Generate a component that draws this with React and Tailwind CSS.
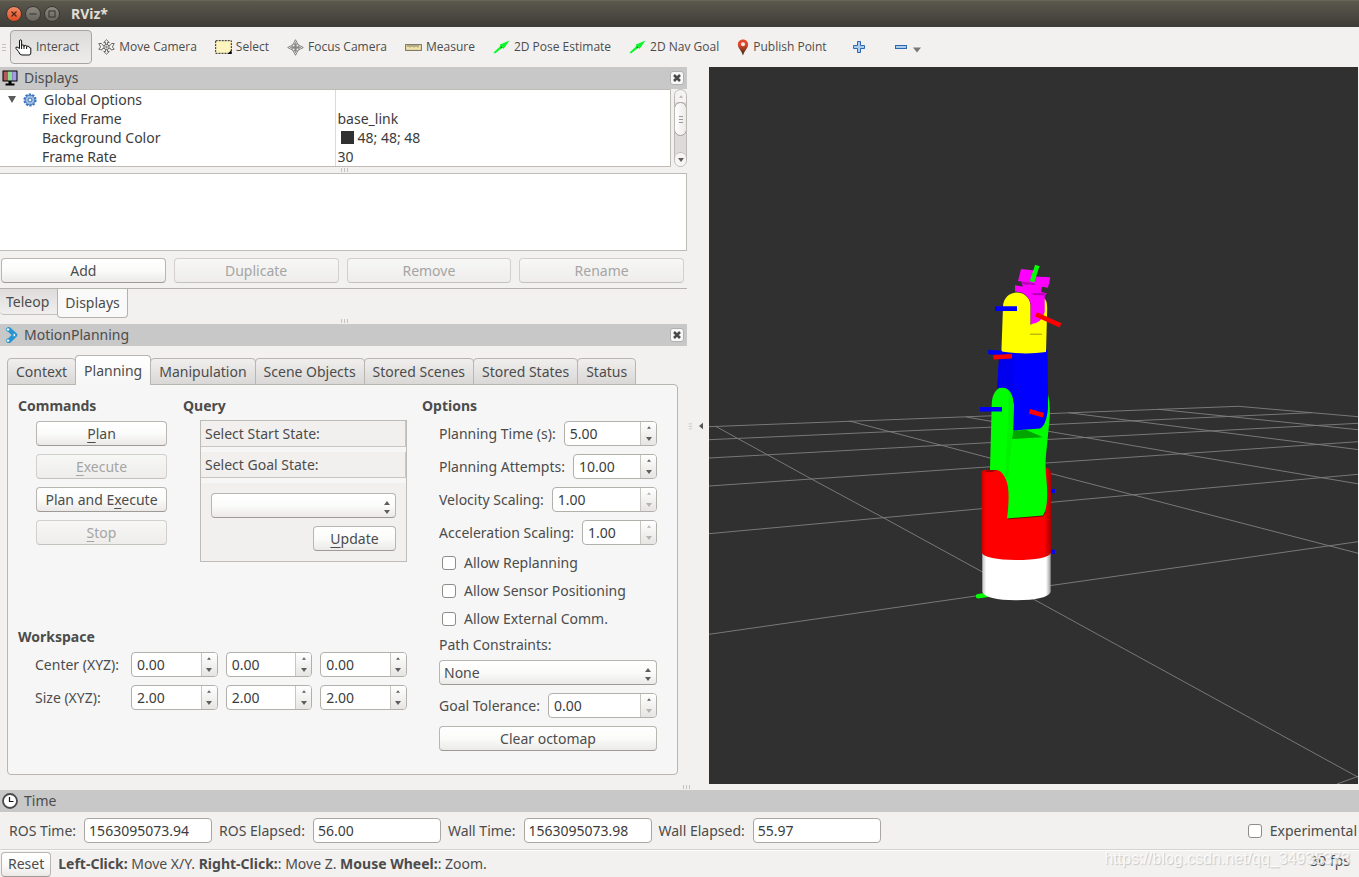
import React, { useState } from "react";

const raised = "border border-[#b9b5b0] border-b-[#9e9a95] rounded-[4px] bg-gradient-to-b from-white via-[#fbfbfa] to-[#ebeae8] text-[#4c4c4c]";
const faded = "border border-[#d2cfcc] border-b-[#c4c1bd] rounded-[4px] bg-gradient-to-b from-[#f7f7f6] to-[#eeedeb] text-[#a5a5a5]";

const Button = ({ children, disabled, className = "" }) => (
   <button type="button" disabled={disabled} className={`h-[25px] px-1 text-center leading-none whitespace-nowrap ${disabled ? faded : raised} ${className}`}>
      {children}
   </button>
);

// underlined mnemonic letter
const Key = ({ children }) => <span className="underline underline-offset-3">{children}</span>;

const Triangle = ({ dir, dim, small }) => (
   <svg viewBox="0 0 6 4" className={small ? "w-1 h-[3px]" : "w-[6px] h-1"} fill={dim ? "#b4b4b4" : "#5e5e5e"}>
      <path d={dir === "up" ? "M0 4 L3 0 L6 4Z" : "M0 0 L3 4 L6 0Z"} />
   </svg>
);

const SpinBox = ({ id, label, value, upDim, downDim, className = "" }) => {
   const [val, setVal] = useState(value);
   const step = (n) => setVal((parseFloat(val) + n).toFixed(2));
   return (
      <div className={`flex h-[25px] min-w-0 border border-[#b3afaa] rounded-[4px] bg-white overflow-hidden ${className}`}>
         <input
            id={id}
            aria-label={label}
            value={val}
            onChange={(e) => setVal(e.target.value)}
            className="flex-1 min-w-0 px-[5px] text-[#3c3c3c] outline-none"
         />
         <div className="flex flex-col w-4 shrink-0 border-l border-[#c9c6c2] bg-gradient-to-b from-white to-[#e6e5e3]">
            <button type="button" aria-label="Increase" onClick={() => step(1)} className="flex-1 flex items-center justify-center">
               <Triangle dir="up" dim={upDim} small />
            </button>
            <button type="button" aria-label="Decrease" onClick={() => step(-1)} className="flex-1 flex items-center justify-center">
               <Triangle dir="down" dim={downDim} />
            </button>
         </div>
      </div>
   );
};

const OptionRow = ({ id, label, ...rest }) => (
   <div className="flex items-center gap-2">
      <label htmlFor={id} className="whitespace-nowrap">{label}</label>
      <SpinBox id={id} className="flex-1" {...rest} />
   </div>
);

const Combo = ({ id, label, options }) => (
   <div className="relative">
      <select id={id} aria-label={label} className={`appearance-none w-full h-[25px] px-1 ${raised}`}>
         {options.map((o) => <option key={o}>{o}</option>)}
      </select>
      <span className="absolute right-[6px] top-2 flex flex-col gap-[5px] pointer-events-none">
         <Triangle dir="up" />
         <Triangle dir="down" />
      </span>
   </div>
);

const Check = ({ id, label }) => (
   <div className="flex items-center gap-2">
      <input id={id} type="checkbox" className="appearance-none size-[14px] border border-[#8f8b86] rounded-[3px] bg-white checked:bg-[#f07746]" />
      <label htmlFor={id} className="whitespace-nowrap">{label}</label>
   </div>
);

const Grip = ({ vertical }) => (
   <svg viewBox="0 0 8 8" className={`size-2 ${vertical ? "rotate-90" : ""}`} stroke="#c4c2bf">
      <path d="M1.5 2V6M4.5 2V6M7.5 2V6" />
   </svg>
);

const DockTitle = ({ icon, children }) => (
   <div className="flex items-center h-[22px] bg-[#c8c8c8] pl-[2px] pr-[3px]">
      <span className="w-[22px]">{icon}</span>
      <h2 className="flex-1">{children}</h2>
      <button type="button" aria-label={`Close ${children}`} className="size-[14px] flex items-center justify-center rounded-[3px] bg-[#f8f8f8] border border-[#b0b0b0]">
         <svg viewBox="0 0 8 8" className="size-2" stroke="#4a4a4a" strokeWidth="2.6"><path d="M1 1L7 7M7 1L1 7" /></svg>
      </button>
   </div>
);

const HandIcon = () => (
   <svg viewBox="0 0 17 17" className="size-[17px]" fill="#fff" stroke="#111" strokeLinejoin="round">
      <path d="M3.5 12.5 L1 9.5 Q0.3 8 2 8 L4.5 9.5 V2 Q4.5 0.8 5.5 0.8 Q6.6 0.8 6.6 2 V7 Q6.6 5.8 7.6 5.8 Q9 5.8 9 7 V7.5 Q9 6.3 10.2 6.3 Q11.6 6.3 11.6 7.5 V8 Q11.8 7 13 7 Q14.3 7.2 14.3 8.6 L15.8 9 V14 Q15.8 16 14 16 H7 Q4.5 16 3.5 12.5Z" />
      <path d="M6.6 7V10M9 7V10M11.6 8V10" fill="none" />
   </svg>
);

const MoveIcon = () => (
   <svg viewBox="0 0 17 16" className="w-[17px] h-4" fill="#f4f4f4" stroke="#5a5a5a" strokeWidth="0.9">
      <path d="M8.5 0.8 L11.3 3.5 H9.5 V5.4 H7.5 V3.5 H5.7Z M8.5 15.2 L5.7 12.5 H7.5 V10.6 H9.5 V12.5 H11.3Z" />
      <path d="M0.8 4.5 H3.5 L5 6.5 L7 7 V9 L4.5 9.5 L3.8 11 L0.8 10.2 L2.6 8Z M16.2 4.5 H13.5 L12 6.5 L10 7 V9 L12.5 9.5 L13.2 11 L16.2 10.2 L14.4 8Z" />
      <circle cx="8.5" cy="8" r="2.6" />
      <circle cx="8.5" cy="8" r="0.8" />
   </svg>
);

const SelectIcon = () => (
   <svg viewBox="0 0 17 14" className="w-[17px] h-[14px]">
      <rect x="0.7" y="0.7" width="15.6" height="12.6" fill="#fff6bf" stroke="#222" strokeDasharray="2 1" />
      <path d="M16.5 10 L12.5 14 H16.5Z" fill="#000" />
   </svg>
);

const FocusIcon = () => (
   <svg viewBox="0 0 17 17" className="size-[17px]" fill="none" stroke="#777">
      <circle cx="8.5" cy="8.5" r="4.3" />
      <circle cx="8.5" cy="8.5" r="1.5" />
      <path d="M8.5 0.7 L10 3.5 V6 H7 V3.5Z M8.5 16.3 L7 13.5 V11 H10 V13.5Z M0.7 8.5 L3.5 7 H6 V10 H3.5Z M16.3 8.5 L13.5 10 H11 V7 H13.5Z" fill="#e8e8e8" strokeWidth="0.9" />
      <path d="M8.5 3V14M3 8.5H14" strokeWidth="0.7" />
   </svg>
);

const RulerIcon = () => (
   <svg viewBox="0 0 17 7" className="w-[17px] h-[7px]">
      <rect x="0.6" y="0.6" width="15.8" height="5.8" fill="#efe3ab" stroke="#75715c" />
      <path d="M3 1V3M5 1V3.5M7 1V3M9 1V3.5M11 1V3M13 1V3.5" stroke="#6b6752" strokeWidth="0.8" />
   </svg>
);

const ArrowIcon = () => (
   <svg viewBox="0 0 17 14" className="w-[17px] h-[14px]">
      <path d="M0.5 12.5 L7.5 6 L6.5 4.8 L16.5 0.5 L10.5 9 L9.5 7.8 L2 13.6Z" fill="#0ef52a" />
      <path d="M7.5 6 L9.5 7.8 L8 8.2Z" fill="#0a6a18" />
   </svg>
);

const PinIcon = () => (
   <svg viewBox="0 0 12 17" className="w-3 h-[17px]">
      <defs>
         <linearGradient id="pin" x1="0" y1="0" x2="0" y2="1">
            <stop offset="0.3" stopColor="#e2492c" />
            <stop offset="1" stopColor="#2e2a12" />
         </linearGradient>
      </defs>
      <path d="M6 0.5 C9 0.5 11.2 2.7 11.2 5.6 C11.2 9 7.6 11.5 6 16.5 C4.4 11.5 0.8 9 0.8 5.6 C0.8 2.7 3 0.5 6 0.5Z" fill="url(#pin)" />
      <circle cx="6" cy="5.3" r="2" fill="#f6e9e4" />
   </svg>
);

const PlusIcon = () => (
   <svg viewBox="0 0 12 12" className="size-3">
      <path d="M4.5 0.5H7.5V4.5H11.5V7.5H7.5V11.5H4.5V7.5H0.5V4.5H4.5Z" fill="#a9cbec" stroke="#2f68ae" />
   </svg>
);

const MinusIcon = () => (
   <svg viewBox="0 0 12 4" className="w-3 h-1">
      <rect x="0.5" y="0.5" width="11" height="3" fill="#a9cbec" stroke="#2f68ae" />
   </svg>
);

const MonitorIcon = () => (
   <svg viewBox="0 0 16 16" className="size-4">
      <rect x="0.5" y="0.5" width="15" height="11" rx="0.5" fill="#000" />
      <rect x="1.5" y="1.5" width="4.4" height="9" fill="#b35a5a" />
      <rect x="5.9" y="1.5" width="4.3" height="9" fill="#8fdc95" />
      <rect x="10.2" y="1.5" width="4.3" height="9" fill="#a29be6" />
      <path d="M6.5 11H9.5V13.5H12.5V15.5H3.5V13.5H6.5Z" fill="#000" />
   </svg>
);

const MotionIcon = () => (
   <svg viewBox="0 0 16 16" className="size-4">
      <path d="M7 2.5 L13 8 L7 13.8" fill="none" stroke="#2596d1" strokeWidth="4.6" strokeLinecap="round" strokeLinejoin="round" />
      <g fill="#fff" stroke="#2596d1">
         <circle cx="6" cy="2.5" r="1.7" />
         <circle cx="12.3" cy="8" r="1.5" />
         <circle cx="6" cy="13.6" r="1.7" />
      </g>
   </svg>
);

const ClockIcon = () => (
   <svg viewBox="0 0 16 16" className="size-4">
      <circle cx="8" cy="8" r="7" fill="#fff" stroke="#4a4a4a" strokeWidth="1.8" />
      <path d="M7.5 4V8.5H11.5" fill="none" stroke="#111" strokeWidth="1.2" />
   </svg>
);

const GearIcon = () => (
   <svg viewBox="0 0 14 14" className="size-[14px]">
      <circle cx="7" cy="7" r="5.6" fill="none" stroke="#3d74b8" strokeWidth="2" strokeDasharray="2.2 1.3" />
      <circle cx="7" cy="7" r="4.9" fill="#9dbfe6" stroke="#3d74b8" />
      <circle cx="7" cy="7" r="2" fill="#e6effa" stroke="#3d74b8" />
   </svg>
);

const tools = [
   { name: "Move Camera", icon: <MoveIcon /> },
   { name: "Select", icon: <SelectIcon /> },
   { name: "Focus Camera", icon: <FocusIcon /> },
   { name: "Measure", icon: <RulerIcon /> },
   { name: "2D Pose Estimate", icon: <ArrowIcon /> },
   { name: "2D Nav Goal", icon: <ArrowIcon /> },
   { name: "Publish Point", icon: <PinIcon /> },
];

const TitleBar = () => (
   <header className="flex items-center h-[27px] px-[6px] gap-[3px] bg-gradient-to-b from-[#5b584d] to-[#3e3c37] border-t border-[#6a6657]">
      <button type="button" aria-label="Close" className="size-4 rounded-full bg-gradient-to-b from-[#f58a65] to-[#dd4c1b] border border-[#3a3833] flex items-center justify-center">
         <svg viewBox="0 0 6 6" className="size-[6px]" stroke="#4a2213" strokeWidth="1.2"><path d="M0.5 0.5L5.5 5.5M5.5 0.5L0.5 5.5" /></svg>
      </button>
      <button type="button" aria-label="Minimize" className="size-4 rounded-full bg-gradient-to-b from-[#8b897f] to-[#66645d] border border-[#3a3833] flex items-center justify-center">
         <svg viewBox="0 0 8 8" className="size-2" stroke="#35332f"><path d="M0.5 4H7.5" /></svg>
      </button>
      <button type="button" aria-label="Maximize" className="size-4 rounded-full bg-gradient-to-b from-[#8b897f] to-[#66645d] border border-[#3a3833] flex items-center justify-center">
         <svg viewBox="0 0 8 8" className="size-2" stroke="#35332f" fill="none"><rect x="1" y="1" width="6" height="6" /></svg>
      </button>
      <h1 className="pl-2 font-bold text-[#e0ddd3]">RViz*</h1>
   </header>
);

const Toolbar = () => (
   <nav className="flex items-center h-10 gap-[18px] text-[12px] whitespace-nowrap font-['Open_Sans',sans-serif]">
      <div className="flex items-center gap-[2px] -mr-3">
         <Grip vertical />
         <button type="button" className="flex items-center gap-1 h-[34px] pl-1 pr-3 border border-[#a8a5a1] rounded-[4px] bg-gradient-to-b from-[#dddbd9] to-[#eeedeb]">
            <HandIcon />Interact
         </button>
      </div>
      {tools.map((t) => (
         <button key={t.name} type="button" className="flex items-center gap-1">
            {t.icon}{t.name}
         </button>
      ))}
      <button type="button" aria-label="Add tool" className="ml-2"><PlusIcon /></button>
      <button type="button" aria-label="Remove tool" className="flex items-center gap-[6px] ml-3">
         <MinusIcon />
         <svg viewBox="0 0 8 6" className="w-2 h-[6px] mt-[6px]" fill="#777"><path d="M0 0.5H8L4 5.5Z" /></svg>
      </button>
   </nav>
);

const DisplaysPanel = () => (
   <section>
      <DockTitle icon={<MonitorIcon />}>Displays</DockTitle>
      <div className="flex gap-[3px]">
         <div className="flex-1 bg-white border border-l-0 border-[#bfbcb8] text-[#3c3c3c]">
            <table className="w-full table-fixed border-collapse">
               <tbody className="[&_td]:h-[19px] [&_td]:p-0 [&_td]:leading-[19px] [&_td:last-child]:border-l [&_td:last-child]:border-[#dcdad8] [&_td:last-child]:pl-[2px]">
                  <tr>
                     <td>
                        <div className="flex items-center pl-2">
                           <svg viewBox="0 0 8 7" className="w-2 h-[7px] mr-[7px]" fill="#5a5a5a"><path d="M0 0H8L4 7Z" /></svg>
                           <GearIcon />
                           <span className="pl-[7px]">Global Options</span>
                        </div>
                     </td>
                     <td></td>
                  </tr>
                  <tr><td><span className="pl-[42px]">Fixed Frame</span></td><td>base_link</td></tr>
                  <tr>
                     <td><span className="pl-[42px]">Background Color</span></td>
                     <td><div className="flex items-center gap-1"><span className="size-[13px] ml-[3px] bg-[#303030]" />48; 48; 48</div></td>
                  </tr>
                  <tr><td><span className="pl-[42px]">Frame Rate</span></td><td>30</td></tr>
               </tbody>
            </table>
         </div>
         <div className="flex flex-col w-[13px] border border-[#bcb9b5] rounded-full bg-[#dddbd9] overflow-hidden">
            <span className="h-3 flex items-center justify-center bg-[#f4f3f2]"><Triangle dir="up" dim small /></span>
            <span className="h-[34px] -mx-px flex flex-col items-center justify-center gap-[2px] border border-[#a39f9a] rounded-full bg-gradient-to-r from-white to-[#eceae8]">
               <i className="w-1 h-px bg-[#999]" /><i className="w-1 h-px bg-[#999]" /><i className="w-1 h-px bg-[#999]" />
            </span>
            <span className="flex-1" />
            <span className="h-[14px] flex items-center justify-center bg-[#f6f5f4] border-t border-[#bcb9b5] rounded-t-full"><Triangle dir="down" /></span>
         </div>
      </div>
      <div className="h-[6px] flex items-center justify-center"><Grip /></div>
      <div className="h-[78px] bg-white border border-l-0 border-[#bfbcb8]" />
      <div className="grid grid-cols-4 gap-2 pt-[7px] pb-[5px] pl-px pr-[3px]">
         <Button>Add</Button>
         <Button disabled>Duplicate</Button>
         <Button disabled>Remove</Button>
         <Button disabled>Rename</Button>
      </div>
      <div role="tablist" className="flex items-start border-t border-[#b5b1ac]">
         <button type="button" role="tab" className="h-[26px] pl-[6px] pr-2 border-b border-[#c4c1bd] rounded-bl-[4px] bg-gradient-to-b from-[#dedcda] to-[#f0efed]">Teleop</button>
         <button type="button" role="tab" aria-selected="true" className="h-[29px] px-[7px] border border-t-0 border-[#b5b1ac] rounded-b-[4px] bg-[#f9f9f9]">Displays</button>
      </div>
      <div className="h-[6px] flex items-center justify-center"><Grip /></div>
   </section>
);

const tabs = ["Context", "Planning", "Manipulation", "Scene Objects", "Stored Scenes", "Stored States", "Status"];

const MotionPanel = () => {
   const [active, setActive] = useState("Planning");
   return (
      <section className="flex-1 flex flex-col">
         <DockTitle icon={<MotionIcon />}>MotionPlanning</DockTitle>
         <div className="flex-1 flex flex-col pl-[7px] pr-[9px] pt-[9px] pb-[9px]">
            <div role="tablist" className="flex items-end h-[30px] -mb-px relative">
               {tabs.map((t) => (
                  <button
                     key={t}
                     type="button"
                     role="tab"
                     aria-selected={t === active}
                     onClick={() => setActive(t)}
                     className={`px-2 border border-[#b9b5b0] rounded-t-[4px] whitespace-nowrap ${t === active ? "h-[30px] -ml-px border-b-0 bg-gradient-to-b from-white to-[#f6f6f6]" : "h-[27px] not-first:-ml-px bg-gradient-to-b from-[#f0efee] to-[#dad8d6]"}`}
                  >
                     {t}
                  </button>
               ))}
            </div>
            <div className="flex-1 grid grid-cols-[minmax(0,389fr)_minmax(0,235fr)] gap-[15px] pl-[10px] pr-5 pt-[11px] pb-[23px] border border-[#b9b5b0] rounded-b-[4px] rounded-tr-[4px] bg-[#f6f6f6]">
               <div className="flex flex-col">
                  <div className="flex-1 flex gap-4">
                     <div className="w-[149px]">
                        <h3 className="font-bold leading-5 mb-[5px]">Commands</h3>
                        <div className="flex flex-col gap-2 pl-[18px]">
                           <Button><Key>P</Key>lan</Button>
                           <Button disabled><Key>E</Key>xecute</Button>
                           <Button>Plan and E<Key>x</Key>ecute</Button>
                           <Button disabled><Key>S</Key>top</Button>
                        </div>
                     </div>
                     <div className="flex-1">
                        <h3 className="font-bold leading-5 mb-1">Query</h3>
                        <div className="ml-[17px] border border-[#bfbcb8] whitespace-nowrap">
                           <p className="h-[26px] px-1 leading-[26px] bg-[#f1f0ee] border-r border-b border-[#c9c6c2]">Select Start State:</p>
                           <p className="h-[26px] mt-[5px] px-1 leading-[26px] bg-[#f1f0ee] border-r border-b border-[#c9c6c2]">Select Goal State:</p>
                           <div className="flex flex-col gap-2 mt-[5px] p-[10px] bg-[#f1f0ee]">
                              <Combo label="Goal state" options={[""]} />
                              <Button className="self-end w-[83px]"><Key>U</Key>pdate</Button>
                           </div>
                        </div>
                     </div>
                  </div>
                  <h3 className="font-bold leading-5 mb-[5px]">Workspace</h3>
                  <div className="grid grid-cols-[88px_1fr_1fr_1fr] items-center gap-2 pl-[17px] mb-[41px] whitespace-nowrap">
                     <span>Center (XYZ):</span>
                     <SpinBox label="Center X" value="0.00" />
                     <SpinBox label="Center Y" value="0.00" />
                     <SpinBox label="Center Z" value="0.00" />
                     <span>Size (XYZ):</span>
                     <SpinBox label="Size X" value="2.00" />
                     <SpinBox label="Size Y" value="2.00" />
                     <SpinBox label="Size Z" value="2.00" />
                  </div>
               </div>
               <div>
                  <h3 className="font-bold leading-5 mb-[5px]">Options</h3>
                  <div className="flex flex-col gap-2 pl-[17px]">
                     <OptionRow id="ptime" label="Planning Time (s):" value="5.00" />
                     <OptionRow id="attempts" label="Planning Attempts:" value="10.00" />
                     <OptionRow id="velocity" label="Velocity Scaling:" value="1.00" upDim downDim />
                     <OptionRow id="accel" label="Acceleration Scaling:" value="1.00" upDim downDim />
                     <div className="flex flex-col gap-2 pl-[3px]">
                        <Check id="replan" label="Allow Replanning" />
                        <Check id="sensor" label="Allow Sensor Positioning" />
                        <Check id="external" label="Allow External Comm." />
                     </div>
                     <div className="flex flex-col gap-[7px]">
                        <label htmlFor="constraints" className="leading-4">Path Constraints:</label>
                        <Combo id="constraints" options={["None"]} />
                     </div>
                     <OptionRow id="tolerance" label="Goal Tolerance:" value="0.00" downDim />
                     <Button>Clear octomap</Button>
                  </div>
               </div>
            </div>
         </div>
      </section>
   );
};

// ground grid: polylines in viewport coordinates
const gridLines = [
   "709,426.7 1238.3,406.3 1358,416.7",
   "709,439.7 1046.7,424.7 1311.7,412.7",
   "709,458 1047,439.5 1358,423.3",
   "709,486 1046,463 1358,441.7",
   "709,533.7 1051,502.3 1358,474.3",
   "709,634.3 976,596 1051,585.5 1358,541.7",
   "1337,784 1359,776",
   "715.6,426.3 811.5,479 883.3,517.7 982,571.7 1035,600 1359,777.7",
   "849.3,421 992.5,458.7 1051.5,473.7 1359,553.5",
   "966.4,417 1046.7,431 1359,484",
   "1068.3,412.7 1359,449.7",
   "1158.3,409.3 1359,429.8",
];

const Viewport = () => (
   <div className="relative overflow-hidden bg-[#303030]">
      <svg viewBox="709 67 649 717" preserveAspectRatio="xMidYMid slice" className="absolute inset-0 size-full">
         <defs>
            <linearGradient id="base" x1="0" x2="1">
               <stop offset="0" stopColor="#c4c4c4" /><stop offset="0.06" stopColor="#fff" />
               <stop offset="0.93" stopColor="#fff" /><stop offset="1" stopColor="#999" />
            </linearGradient>
            <linearGradient id="link1" x1="0" x2="1">
               <stop offset="0" stopColor="#c80000" /><stop offset="0.06" stopColor="#f00" />
               <stop offset="0.9" stopColor="#f00" /><stop offset="1" stopColor="#a80000" />
            </linearGradient>
         </defs>
         <g fill="none" stroke="#808080" strokeWidth="0.9">
            {gridLines.map((p) => <polyline key={p} points={p} />)}
         </g>
         <path d="M978 596.2 L988 594.8" stroke="#0f0" strokeWidth="4.4" strokeLinecap="round" />
         <path d="M1050 491H1055M1050 551.7H1055" stroke="#00f" strokeWidth="4" />
         <path d="M982.3 550 V592 Q986 600 1016 600.3 Q1047 600 1050.7 592 V550Z" fill="url(#base)" />
         <path d="M981.7 471 Q985 469 997 470 L1045 480 V468 Q1051 467 1051 474 V553 Q1047 560 1016 560 Q986 559.5 981.7 553Z" fill="url(#link1)" />
         <path d="M984 471 Q990 474 997 470 L990 469Z" fill="#9d0000" />
         <path d="M1007 519.5 L1043 516.5 L1046 512 L1008 517Z" fill="#7a0000" />
         <path d="M991.7 405 C992 382 1013 381 1014 405 H1048 V394 Q1050.5 405 1049.7 418 L1046 455 Q1044.8 466 1046.8 484 Q1048.5 507 1043 515.5 L1007 518.5 Q1011 488 1005 477.5 Q1001 469 995 470 L990 470Z" fill="#0f0" />
         <path d="M1013.3 430.5 L1026.5 430 L1043 437.3 L1012 439Z" fill="#00a500" />
         <path d="M1009 391 Q1014 398 1013.5 412 L1012 440 L1008 478 L1005 476 L1007 440Z" fill="#00f400" />
         <path d="M999.5 350 H1047.5 L1048 408 Q1046.5 425 1040 428.5 L1013.3 430.5 L1014 405 C1013 390 1006 385 997.3 388.5Z" fill="#00f" />
         <path d="M999.5 352 L1014 353 L1013.5 396 Q1007 384 997.3 388.5Z" fill="#0000ee" />
         <path d="M1001.4 351.5 L1003 307 C1003.5 288 1029 288 1030.5 305 V325 L1040 317 L1044 298 Q1047 300 1047.2 308 L1046 352 Q1025 355 1001.4 351.5Z" fill="#ff0" />
         <path d="M1030 334.2H1042" stroke="#99910d" strokeWidth="0.9" />
         <path d="M1021 269 L1036 270.7 L1034 276.5 L1050.3 277.3 L1048 287.8 L1042 286.7 L1041 292 L1047 293.3 L1044.7 296 V312 Q1042 323 1030.7 324.3 V304 Q1028 292 1015 291.5 V285.3 L1023 286.5 L1021 281.5 L1018 281Z" fill="#f0f" />
         <path d="M1021 281.5 L1034 283 L1036 285 L1023 284.5Z M1031 293 L1047 293.3 L1044 295.5 L1034 295Z" fill="#b800b8" />
         <g fill="none" strokeWidth="4.6">
            <path d="M1037.3 265.5 L1032 281.7" stroke="#0f0" />
            <path d="M995 308.6H1017M988.3 352 L1002 353M980 409.3 H1002" stroke="#00f" />
            <path d="M1036 314.3 L1060.5 325.3M993.3 357.3 L1012 356.3M1029.5 411.3 L1043.5 415.3" stroke="#f00" />
         </g>
      </svg>
   </div>
);

const TimeField = ({ id, label, value }) => (
   <div className="flex items-center gap-2">
      <label htmlFor={id}>{label}</label>
      <input id={id} readOnly value={value} className="w-32 h-[25px] px-1 bg-white border border-[#aaa6a1] rounded-[4px] text-[#3c3c3c] outline-none" />
   </div>
);

const App = () => (
   <div className="min-h-screen flex flex-col overflow-hidden bg-[#f2f1ef] text-[#4c4c4c] text-[14px] leading-5 font-['Noto_Sans','Open_Sans',sans-serif]">
      <TitleBar />
      <Toolbar />
      <main className="flex-1 grid grid-cols-[minmax(0,687fr)_22px_minmax(0,649fr)] pr-px">
         <div className="flex flex-col min-w-0">
            <DisplaysPanel />
            <MotionPanel />
         </div>
         <div className="flex items-center justify-center gap-[5px] pr-[6px]">
            <Grip vertical />
            <svg viewBox="0 0 5 8" className="w-[5px] h-2" fill="#555"><path d="M5 0V8L0 4Z" /></svg>
         </div>
         <Viewport />
      </main>
      <div className="h-[6px] flex items-center justify-center pl-3"><Grip /></div>
      <footer>
         <div className="flex items-center h-[22px] bg-[#c8c8c8] pl-[2px]">
            <span className="w-[22px]"><ClockIcon /></span>
            <h2>Time</h2>
         </div>
         <div className="flex items-center h-[38px] gap-[7px] pl-[9px] pr-[2px] border-b border-[#d5d3d0] whitespace-nowrap">
            <TimeField id="ros" label="ROS Time:" value="1563095073.94" />
            <TimeField id="rose" label="ROS Elapsed:" value="56.00" />
            <TimeField id="wall" label="Wall Time:" value="1563095073.98" />
            <TimeField id="walle" label="Wall Elapsed:" value="55.97" />
            <div className="ml-auto"><Check id="exp" label="Experimental" /></div>
         </div>
         <div className="relative flex items-center h-[27px] pl-px pr-[9px] gap-[7px] border-t border-white">
            <Button className="px-[6px]">Reset</Button>
            <p className="flex-1 whitespace-nowrap"><b>Left-Click:</b> Move X/Y. <b>Right-Click:</b>: Move Z. <b>Mouse Wheel:</b>: Zoom.</p>
            <span className="self-start">30 fps</span>
            <span className="absolute right-[9px] -top-[2px] text-[16px] text-white/80 [text-shadow:1px_1px_1px_#c4c4c4] font-['Liberation_Sans',sans-serif]">https://blog.csdn.net/qq_34935373</span>
         </div>
      </footer>
   </div>
);

export default App;
